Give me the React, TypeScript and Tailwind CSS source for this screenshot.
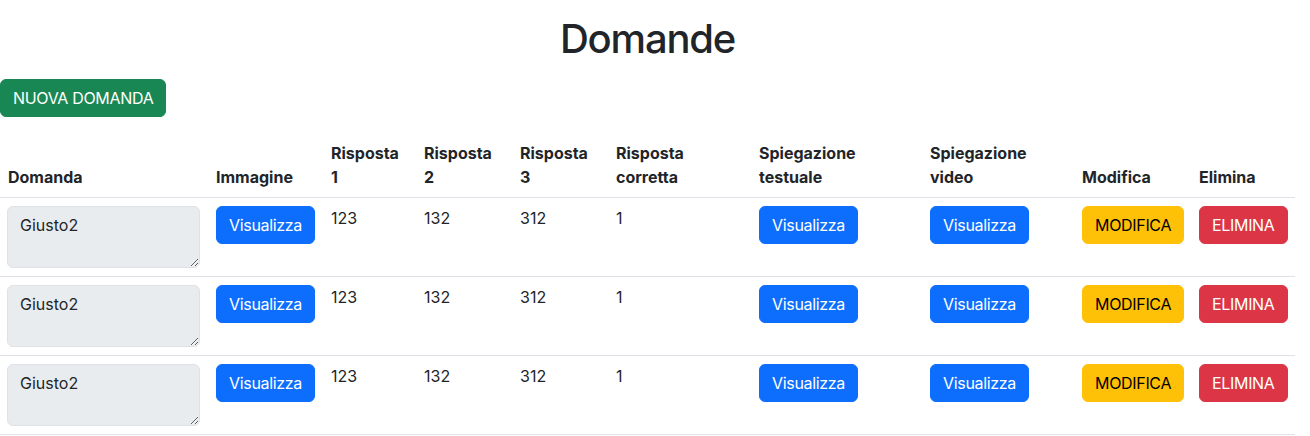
const rows = [
  { domanda: "Giusto2", r1: "123", r2: "132", r3: "312", corretta: "1" },
  { domanda: "Giusto2", r1: "123", r2: "132", r3: "312", corretta: "1" },
  { domanda: "Giusto2", r1: "123", r2: "132", r3: "312", corretta: "1" },
];

const btn = "rounded-[6px] border px-3 py-1.5 text-base leading-6 tracking-[-0.02em]";

function Visualizza() {
  return <button className={`${btn} border-[#0d6efd] bg-[#0d6efd] text-white`}>Visualizza</button>;
}

export default function App() {
  return (
    <div className="w-[1295px] pt-[15px] font-['Inter',sans-serif] text-[#212529]">
      <h1 className="mb-4 text-center text-[40px] font-medium leading-[48px] tracking-[-0.03em]">Domande</h1>
      <button className={`${btn} mb-4 border-[#198754] bg-[#198754] text-white`}>NUOVA DOMANDA</button>
      <table className="w-[1295px] table-fixed border-collapse text-base leading-6">
        <colgroup>
          <col className="w-[208px]" />
          <col className="w-[115px]" />
          <col className="w-[93px]" />
          <col className="w-[96px]" />
          <col className="w-[96px]" />
          <col className="w-[143px]" />
          <col className="w-[171px]" />
          <col className="w-[152px]" />
          <col className="w-[117px]" />
          <col className="w-[104px]" />
        </colgroup>
        <thead>
          <tr className="border-b border-[#dee2e6] text-left align-bottom">
            <th className="p-2 font-bold">Domanda</th>
            <th className="p-2 font-bold">Immagine</th>
            <th className="p-2 font-bold">Risposta 1</th>
            <th className="p-2 font-bold">Risposta 2</th>
            <th className="p-2 font-bold">Risposta 3</th>
            <th className="p-2 font-bold">Risposta corretta</th>
            <th className="p-2 font-bold">Spiegazione testuale</th>
            <th className="p-2 font-bold">Spiegazione video</th>
            <th className="p-2 font-bold">Modifica</th>
            <th className="p-2 font-bold">Elimina</th>
          </tr>
        </thead>
        <tbody>
          {rows.map((row, i) => (
            <tr key={i} className="border-b border-[#dee2e6] align-top">
              <td className="py-2 pl-[7px] pr-2">
                <textarea
                  disabled
                  rows={2}
                  defaultValue={row.domanda}
                  className="block h-[62px] w-[193px] resize rounded-[6px] border border-[#dee2e6] bg-[#e9ecef] px-3 py-1.5 text-base leading-6 text-[#212529]"
                />
              </td>
              <td className="p-2"><Visualizza /></td>
              <td className="p-2">{row.r1}</td>
              <td className="p-2">{row.r2}</td>
              <td className="p-2">{row.r3}</td>
              <td className="p-2">{row.corretta}</td>
              <td className="p-2"><Visualizza /></td>
              <td className="p-2"><Visualizza /></td>
              <td className="p-2">
                <button className={`${btn} border-[#ffc107] bg-[#ffc107] text-black`}>MODIFICA</button>
              </td>
              <td className="p-2">
                <button className={`${btn} border-[#dc3545] bg-[#dc3545] text-white`}>ELIMINA</button>
              </td>
            </tr>
          ))}
        </tbody>
      </table>
    </div>
  );
}
